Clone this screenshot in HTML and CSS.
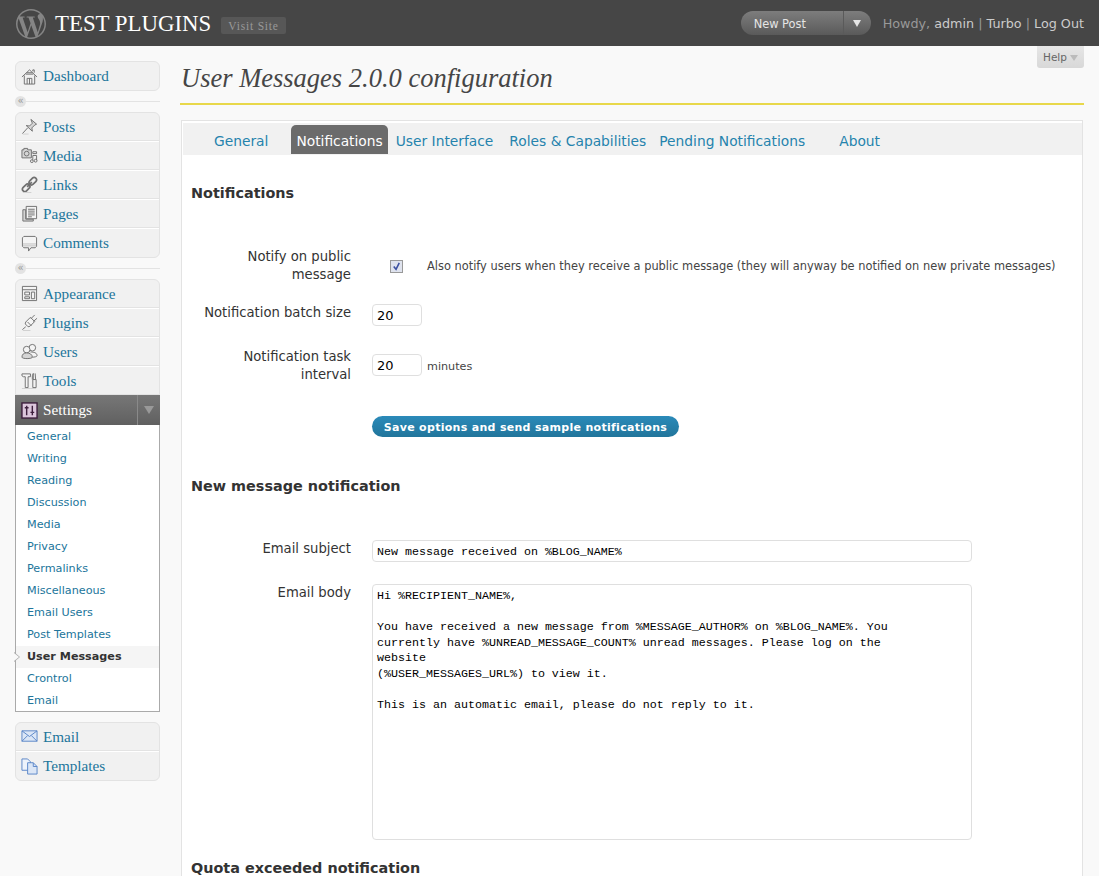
FILE: index.html
```html
<!DOCTYPE html>
<html lang="en">
<head>
<meta charset="utf-8">
<title>User Messages 2.0.0 configuration</title>
<link rel="stylesheet" href="styles.css">
</head>
<body>
<header class="topbar">
  <svg class="wp-logo" viewBox="0 0 24 24"><path d="M21.469 6.825c.84 1.537 1.318 3.3 1.318 5.175 0 3.979-2.156 7.456-5.363 9.325l3.295-9.527c.615-1.54.82-2.771.82-3.864 0-.405-.026-.78-.07-1.11m-7.981.105c.647-.03 1.232-.105 1.232-.105.582-.075.514-.93-.067-.899 0 0-1.755.135-2.88.135-1.064 0-2.85-.15-2.85-.15-.585-.03-.661.855-.075.885 0 0 .54.061 1.125.09l1.68 4.605-2.37 7.08L5.354 6.9c.649-.03 1.234-.1 1.234-.1.585-.075.516-.93-.065-.896 0 0-1.746.138-2.874.138-.2 0-.438-.008-.69-.015C4.911 3.15 8.235 1.215 12 1.215c2.809 0 5.365 1.072 7.286 2.833-.046-.003-.091-.009-.141-.009-1.06 0-1.812.923-1.812 1.914 0 .89.513 1.643 1.06 2.531.411.72.89 1.643.89 2.977 0 .915-.354 2.1-.821 3.5l-1.075 3.59-3.9-11.61.001.014zM12 22.784c-1.059 0-2.081-.153-3.048-.437l3.237-9.406 3.315 9.087c.024.053.05.101.078.149-1.12.393-2.325.609-3.582.609M1.211 12c0-1.564.336-3.05.935-4.39L7.29 21.709C3.694 19.96 1.212 16.271 1.211 12M12 0C5.385 0 0 5.385 0 12s5.385 12 12 12 12-5.385 12-12S18.615 0 12 0"/></svg>
  <h1 class="site-title">TEST PLUGINS</h1>
  <a class="visit-site">Visit Site</a>
  <div class="favorites"><span class="fav-label">New Post</span><span class="fav-toggle"></span></div>
  <p class="greeting">Howdy, <a>admin</a> | <a>Turbo</a> | <a>Log Out</a></p>
</header>
<div class="layout">
  <nav class="sidebar">
    <ul class="menu-group">
      <li class="menu-item"><svg class="ico" viewBox="0 0 18 18"><path d="M1 9.500 9 2l8 7.500M12.500 3.500V2H14v3M3.500 8v9h11V8M6.500 17v-6h5v6M9 11v6M5 6.500h8M6 5h6"/></svg><a>Dashboard</a></li>
    </ul>
    <div class="menu-sep"><span class="sep-knob">«</span></div>
    <ul class="menu-group">
      <li class="menu-item"><svg class="ico" viewBox="0 0 18 18"><path class="fill-gray" d="M10.500 1.500l6 5-2 1-3 3 .5 3.500-6.500-6 3.500.5 3-3z"/><path d="M7 10.500 1.500 16.500"/><path class="shadow" d="M2 17h6"/></svg><a>Posts</a></li>
      <li class="menu-item"><svg class="ico" viewBox="0 0 18 18"><path class="fill-gray" d="M1 3h2V1.500h4V3h4v8.500H1z"/><circle cx="6" cy="7" r="2.500"/><path d="M12.500 5h4v2h-4zM12.500 14V9h4v5"/><circle cx="11.500" cy="15" r="1.500"/><circle cx="15.500" cy="14.500" r="1.500"/></svg><a>Media</a></li>
      <li class="menu-item"><svg class="ico" viewBox="0 0 18 18"><rect class="thick" x="1" y="10" width="9" height="5" rx="2.500" transform="rotate(-45 5.500 12.500)"/><rect class="thick" x="8" y="3" width="9" height="5" rx="2.500" transform="rotate(-45 12.500 5.500)"/><path class="thick" d="M6.500 11.500l5-5"/><path class="shadow" d="M2 17.500h9"/></svg><a>Links</a></li>
      <li class="menu-item"><svg class="ico" viewBox="0 0 18 18"><path class="fill-gray" d="M2 5h3v10h8v2H2z"/><path class="fill-light" d="M5.500 1.500h11v13h-11z"/><path d="M7.500 4.500h7M7.500 6.500h7M7.500 8.500h7M7.500 10.500h7M7.500 12.500h4"/></svg><a>Pages</a></li>
      <li class="menu-item"><svg class="ico" viewBox="0 0 18 18"><path class="fill-light" d="M3 1.500h12l1.500 1.500v9L15 13.500h-4.500L8 17v-3.500H3L1.500 12V3z"/><path class="shadow-dark" d="M2 9.500h14M2 11.500h14"/></svg><a>Comments</a></li>
    </ul>
    <div class="menu-sep"><span class="sep-knob">«</span></div>
    <ul class="menu-group">
      <li class="menu-item"><svg class="ico" viewBox="0 0 18 18"><path class="fill-light" d="M1.500 1.500h15v15h-15z"/><path d="M1.500 5h15M4 7.500h5v3H4zM4 12.500h5v2H4zM11 7.500h3.500v7H11z"/></svg><a>Appearance</a></li>
      <li class="menu-item"><svg class="ico" viewBox="0 0 18 18"><path class="fill-light" d="M5 8.500l5-5 4.500 4.500-5 5-2 .5-3-3z"/><path d="M1.500 16.500l3.500-3M10.500 5l4-4M13 8l4-3.500M7 8.500l4 4"/><path class="shadow" d="M2 17.500h8"/></svg><a>Plugins</a></li>
      <li class="menu-item"><svg class="ico" viewBox="0 0 18 18"><circle class="fill-light" cx="12" cy="5" r="3.500"/><path class="fill-light" d="M10 9.500c4 0 7 1 7 4 0 1-3 1.500-5 1.500"/><circle class="fill-light" cx="6" cy="7" r="3.500"/><path class="fill-gray" d="M1 15c0-3 2-4.500 5-4.500s6 1.500 6 4.500c0 2-11 2-11 0z"/></svg><a>Users</a></li>
      <li class="menu-item"><svg class="ico" viewBox="0 0 18 18"><path class="fill-light" d="M1 2h9v3H7.500v11.500h-3V5H2.500L1 4zM12 8V4l1-2.500V8M15 1.500 15.500 8M12.500 8h3.500v8.500h-3.500z"/><path class="shadow" d="M1 17.500h15"/></svg><a>Tools</a></li>
      <li class="menu-item menu-item-current">
        <svg class="ico ico-settings" viewBox="0 0 18 18"><rect class="set-box" x="1" y="1" width="16" height="16"/><path class="set-line" d="M6 4v10M12 4v10M4 6h4M10 11h4"/></svg>
        <a>Settings</a>
        <span class="current-toggle"></span>
      </li>
      <li class="submenu">
        <ul class="submenu-list">
          <li><a>General</a></li>
          <li><a>Writing</a></li>
          <li><a>Reading</a></li>
          <li><a>Discussion</a></li>
          <li><a>Media</a></li>
          <li><a>Privacy</a></li>
          <li><a>Permalinks</a></li>
          <li><a>Miscellaneous</a></li>
          <li><a>Email Users</a></li>
          <li><a>Post Templates</a></li>
          <li class="sub-current"><a>User Messages</a></li>
          <li><a>Crontrol</a></li>
          <li><a>Email</a></li>
        </ul>
      </li>
    </ul>
    <ul class="menu-group menu-group-last">
      <li class="menu-item"><svg class="ico ico-blue" viewBox="0 0 18 18"><path class="fill-blue" d="M1 3h16v11H1z"/><path d="M1 3l8 6 8-6M1 14l6-6M17 14l-6-6"/></svg><a>Email</a></li>
      <li class="menu-item"><svg class="ico ico-blue" viewBox="0 0 18 18"><path class="fill-pale" d="M1 1h6l3 3v9H1z"/><path class="fill-blue" d="M7 5h6l4 4v8H7z"/><path d="M13 5v4h4"/></svg><a>Templates</a></li>
    </ul>
  </nav>
  <main class="content">
    <a class="help-tab">Help<span class="help-arrow"></span></a>
    <h2 class="page-title">User Messages 2.0.0 configuration</h2>
    <section class="panel">
      <ul class="tabs">
        <li class="tab tab-general"><a>General</a></li>
        <li class="tab tab-active"><a>Notifications</a></li>
        <li class="tab tab-ui"><a>User Interface</a></li>
        <li class="tab tab-roles"><a>Roles &amp; Capabilities</a></li>
        <li class="tab tab-pending"><a>Pending Notifications</a></li>
        <li class="tab tab-about"><a>About</a></li>
      </ul>
      <div class="panel-body">
        <h3 class="section-title">Notifications</h3>
        <div class="form-row row-public">
          <label class="field-label">Notify on public<br>message</label>
          <div class="field field-check"><span class="checkbox"><svg viewBox="0 0 12 12"><path d="M3 6l2.500 3L9 2"/></svg></span><span class="hint">Also notify users when they receive a public message (they will anyway be notified on new private messages)</span></div>
        </div>
        <div class="form-row row-batch">
          <label class="field-label">Notification batch size</label>
          <div class="field"><input class="input-small" type="text" value="20"></div>
        </div>
        <div class="form-row row-interval">
          <label class="field-label">Notification task<br>interval</label>
          <div class="field"><input class="input-small" type="text" value="20"><span class="unit">minutes</span></div>
        </div>
        <div class="form-row row-save">
          <span class="field-label"></span>
          <div class="field"><button class="button-primary" type="button">Save options and send sample notifications</button></div>
        </div>
        <h3 class="section-title section-second">New message notification</h3>
        <div class="form-row row-subject">
          <label class="field-label">Email subject</label>
          <div class="field"><input class="input-wide" type="text" value="New message received on %BLOG_NAME%"></div>
        </div>
        <div class="form-row row-body">
          <label class="field-label">Email body</label>
          <div class="field"><textarea class="input-area" spellcheck="false">Hi %RECIPIENT_NAME%,

You have received a new message from %MESSAGE_AUTHOR% on %BLOG_NAME%. You
currently have %UNREAD_MESSAGE_COUNT% unread messages. Please log on the
website
(%USER_MESSAGES_URL%) to view it.

This is an automatic email, please do not reply to it.</textarea></div>
        </div>
        <h3 class="section-title section-third">Quota exceeded notification</h3>
      </div>
    </section>
  </main>
</div>
</body>
</html>
```
FILE: styles.css
```css
* { box-sizing: border-box; }
html, body { margin: 0; padding: 0; height: 876px; overflow: hidden; }
body { background: #f9f9f9; color: #333; font: 13.200px/18px "DejaVu Sans", Verdana, sans-serif; }
ul { list-style: none; margin: 0; padding: 0; }
a { color: #21759b; text-decoration: none; }

.topbar { height: 46px; background: #464646; display: flex; align-items: center; padding: 0 15px 0 16px; }
.wp-logo { width: 30px; height: 30px; margin-top: 2px; fill: #858585; flex: none; }
.site-title { margin: 2px 0 0 9px; font: 400 22.850px/30px "Liberation Serif", serif; color: #fff; }
.visit-site { margin: 5px 0 0 10px; height: 17px; padding: 0 7px; background: #575757; border-radius: 2px; color: #999; font: 11.500px/18px "Liberation Serif", serif; letter-spacing: .8px; }
.favorites { margin-left: auto; width: 130px; height: 24px; border-radius: 12px; background: linear-gradient(#7d7d7d, #5a5a5a); display: flex; align-items: center; color: #e5e5e5; font-size: 11.400px; }
.fav-label { flex: 1; padding: 1px 0 0 13px; }
.fav-toggle { width: 28px; height: 24px; border-left: 1px solid #5a5a5a; position: relative; }
.fav-toggle::after, .current-toggle::after { content: ""; position: absolute; left: 9px; top: 9px; border: 4px solid transparent; border-top: 7px solid #e5e5e5; border-bottom: 0; }
.greeting { margin: 2px 0 0 12px; color: #999; font-size: 12.750px; }
.greeting a { color: #ccc; }

.layout { display: flex; align-items: flex-start; padding-left: 15px; }
.sidebar { width: 145px; flex: none; padding-top: 15px; }
.menu-group { border: 1px solid #e3e3e3; border-radius: 6px; background: #f1f1f1; }
.menu-group-last { margin-top: 10px; }
.menu-item { height: 29px; display: flex; align-items: center; padding-left: 5px; border-bottom: 1px solid #e3e3e3; border-top: 1px solid #fff; position: relative; }
.menu-item a { margin-left: 5px; font: 15.200px/20px "Liberation Serif", serif; }
.menu-group > .menu-item:first-child { border-top: 0; height: 28px; }
.menu-group > .menu-item:last-child { border-bottom: 0; }
.ico { width: 17px; height: 17px; fill: none; stroke: #6f6f6f; stroke-width: 1; flex: none; }
.ico-blue { stroke: #5a86c8; }
.fill-blue { fill: #dbe6f6; }
.fill-pale { fill: #eef3fb; }
.fill-gray { fill: #d5d5d5; }
.fill-light { fill: #f4f4f4; }
.thick { stroke-width: 1.800; }
.shadow { stroke: #cfcfcf; }
.shadow-dark { stroke: #bdbdbd; }
.set-box { fill: #dcc6dc; stroke: #3d1f3d; stroke-width: 1.500; }
.set-line { stroke: #3d1f3d; stroke-width: 1.500; }
.menu-item-current { background: linear-gradient(#777, #606060); border: 0; height: 30px; margin: 0 -1px; padding-left: 6px; }
.menu-item-current a { color: #fff; }
.current-toggle { position: absolute; right: 0; top: 0; width: 23px; height: 100%; border-left: 1px solid #8a8a8a; }
.current-toggle::after { left: 6px; top: 11px; border-width: 5px; border-top: 8px solid #999; border-bottom: 0; }
.menu-sep { height: 21px; position: relative; display: flex; align-items: center; }
.menu-sep::before { content: ""; flex: 1; height: 1px; background: #e3e3e3; }
.sep-knob { position: absolute; left: 0; top: 5px; width: 11px; height: 11px; border-radius: 50%; background: #e3e3e3; color: #999; font-size: 10px; line-height: 10px; text-align: center; }
.menu-group > .submenu { background: #fff; border: 1px solid #aaa; border-top: 0; margin: 0 -1px -1px; padding-top: 1px; }
.submenu-list li { height: 22px; padding-left: 11px; font-size: 11.200px; line-height: 22px; position: relative; }
.submenu-list li:last-child { height: 21px; }
.submenu-list .sub-current { background: #f5f5f5; }
.sub-current a { color: #333; font-weight: 700; }
.sub-current::before { content: ""; position: absolute; left: -2px; top: 6px; border: 5px solid transparent; border-left: 6px solid #aaa; border-right: 0; }
.sub-current::after { content: ""; position: absolute; left: -2px; top: 7px; border: 4px solid transparent; border-left: 5px solid #f9f9f9; border-right: 0; }

.content { flex: 1; min-width: 0; margin-left: 20px; margin-right: 15px; position: relative; }
.help-tab { position: absolute; right: 0; top: 0; width: 47px; height: 22px; background: linear-gradient(#e6e6e6, #d8d8d8); border-radius: 0 0 3px 3px; color: #666; font-size: 10.500px; line-height: 22px; padding-left: 6px; }
.help-arrow { display: inline-block; margin-left: 3px; border: 4px solid transparent; border-top: 6px solid #bbb; border-bottom: 0; }
.page-title { margin: 0; height: 59px; padding: 17px 0 0 1px; font: italic 400 26.500px/30px "Liberation Serif", serif; color: #464646; border-bottom: 2px solid #e8d84b; }
.panel { margin: 15px 1px 0; background: #fff; border: 1px solid #e3e3e3; border-bottom: 0; padding: 2px 0 0 1px; height: 760px; }
.tabs { display: flex; align-items: flex-end; height: 32px; background: #f1f1f1; font-size: 13.800px; line-height: 20px; padding-bottom: 1px; }
.tab { height: 29px; padding: 6px 5px 0; }
.tab a { color: #2583ad; }
.tab-general { margin-left: 26px; }
.tab-active { margin-left: 18px; background: #6b6b6b; border-radius: 5px 5px 0 0; }
.tab-active a { color: #fff; }
.tab-ui { margin-left: 3px; }
.tab-roles { margin-left: 6px; }
.tab-pending { margin-left: 3px; }
.tab-about { margin-left: 24px; }

.panel-body { padding: 0 0 0 8px; }
.section-title { margin: 0; font-size: 14.400px; line-height: 20px; font-weight: 700; color: #333; padding-top: 28px; }
.section-second { padding-top: 39px; }
.section-third { padding-top: 18px; }
.form-row { display: flex; }
.field-label { width: 160px; text-align: right; flex: none; }
.field { margin-left: 21px; display: flex; align-items: center; }
.row-public { margin-top: 45px; }
.row-batch { margin-top: 20px; }
.row-batch .field { align-self: flex-start; }
.row-interval { margin-top: 22px; }
.row-interval .field { align-self: flex-start; margin-top: 6px; }
.row-save { margin-top: 32px; }
.row-subject { margin-top: 44px; }
.row-body { margin-top: 22px; }
.field-check { padding-left: 18px; font-size: 11.400px; }
.checkbox { width: 13px; height: 13px; border: 1px solid #999; background: #dfe3ee; display: block; flex: none; }
.checkbox svg { display: block; width: 11px; height: 11px; fill: none; stroke: #3b4fa0; stroke-width: 1.700; }
.hint { margin-left: 24px; white-space: nowrap; color: #444; }
.input-small { width: 50px; height: 22px; border: 1px solid #dfdfdf; border-radius: 4px; padding: 0 4px; font: 13px "DejaVu Sans", sans-serif; color: #000; background: #fff; outline: 0; }
.unit { margin: 3px 0 0 5px; font-size: 11.200px; color: #444; }
.button-primary { height: 21px; width: 307px; padding: 1px 0 0; border: 0; border-radius: 11px; background: linear-gradient(#2b8ab9, #21759b); color: #fff; font: 700 11px "DejaVu Sans", sans-serif; letter-spacing: .3px; }
.input-wide { width: 600px; height: 22px; border: 1px solid #dfdfdf; border-radius: 4px; padding: 2px 4px 0; font: 11.670px "Liberation Mono", monospace; color: #000; background: #fff; outline: 0; }
.input-area { width: 600px; height: 256px; border: 1px solid #dfdfdf; border-radius: 4px; padding: 4px; font: 11.670px/15.500px "Liberation Mono", monospace; color: #000; background: #fff; resize: none; outline: 0; display: block; }
```
